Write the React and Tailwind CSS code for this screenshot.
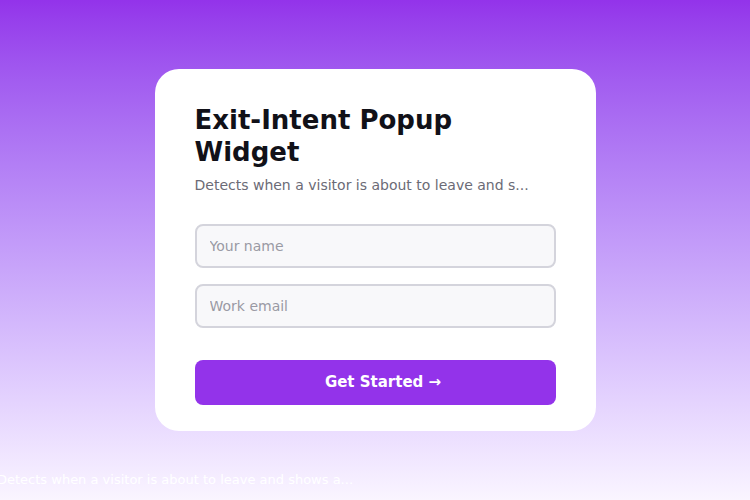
export default function App() {
  return (
    <div
      className="relative flex h-[500px] w-[750px] items-center justify-center overflow-hidden bg-gradient-to-b from-[#9333ea] to-[#faf5ff]"
      style={{ fontFamily: '"DejaVu Sans", sans-serif' }}
    >
      <div className="w-[441px] rounded-[24px] bg-white px-10 pt-[35px] pb-[26px]">
        <h1 className="text-[26px] font-bold leading-[32px] text-[#111118]">
          Exit-Intent Popup Widget
        </h1>
        <p className="mt-[7px] text-[14px] leading-5 text-[#6b6b76]">
          Detects when a visitor is about to leave and s...
        </p>
        <div className="mt-[29px] flex flex-col gap-4">
          <input
            className="h-[44px] w-full rounded-lg border-2 border-[#d4d4dc] bg-[#f8f8fa] px-[13px] text-[14px] text-[#111] outline-none placeholder:text-[#9a9aa4]"
            placeholder="Your name"
          />
          <input
            className="h-[44px] w-full rounded-lg border-2 border-[#d4d4dc] bg-[#f8f8fa] px-[13px] text-[14px] text-[#111] outline-none placeholder:text-[#9a9aa4]"
            placeholder="Work email"
          />
        </div>
        <button className="mt-[32px] flex h-[45px] w-full items-center justify-center rounded-lg bg-[#9333ea] pl-4 text-[15px] font-bold text-white">
          Get Started →
        </button>
      </div>
      <div className="absolute bottom-[12px] left-[-3px] text-[13px] leading-4 text-white">
        Detects when a visitor is about to leave and shows a...
      </div>
    </div>
  );
}
